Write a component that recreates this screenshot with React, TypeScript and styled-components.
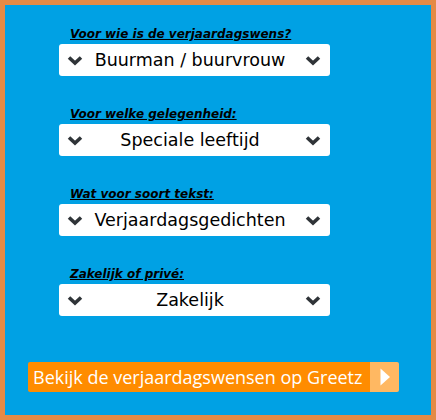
import styled, { createGlobalStyle } from 'styled-components';

const GlobalStyle = createGlobalStyle`
  html, body {
    margin: 0;
    padding: 0;
  }
  body {
    font-family: "DejaVu Sans", Verdana, sans-serif;
  }
`;

const Frame = styled.div`
  box-sizing: border-box;
  width: 436px;
  height: 420px;
  background-color: #00a1e4;
  border: 5px solid #e58a45;
  display: flex;
  flex-direction: column;
  padding: 20px 0 0 54px;
`;

const Field = styled.div`
  display: flex;
  flex-direction: column;
  margin-bottom: 29px;
`;

const Label = styled.div`
  font-family: "DejaVu Sans", Verdana, sans-serif;
  font-size: 12px;
  font-weight: bold;
  font-style: italic;
  text-decoration: underline;
  color: #000;
  height: 19px;
  line-height: 18px;
  padding-left: 11px;
`;

const Select = styled.div`
  box-sizing: border-box;
  width: 271px;
  height: 32px;
  background: #fff;
  border-radius: 3px;
  display: flex;
  align-items: center;
  padding: 0 9px 0 8px;
`;

const Value = styled.div`
  flex: 1;
  text-align: center;
  font-family: "DejaVu Sans", Verdana, sans-serif;
  font-size: 17.5px;
  color: #000;
  padding-right: 8px;
  white-space: nowrap;
`;

const Chevron = () => (
  <svg width="16" height="11" viewBox="0 0 16 11">
    <path d="M2 2.5 L8 8 L14 2.5" fill="none" stroke="#2f3438" strokeWidth="3.6" />
  </svg>
);

const Button = styled.div`
  margin-top: 17px;
  margin-left: -31px;
  width: 371px;
  height: 30px;
  display: flex;
  border-radius: 2px;
  overflow: hidden;
`;

const ButtonText = styled.div`
  flex: 1;
  background: #ff8c00;
  color: #fff;
  font-family: "Open Sans", "DejaVu Sans", sans-serif;
  font-size: 18px;
  line-height: 30px;
  padding-left: 5px;
  white-space: nowrap;
`;

const ArrowBox = styled.div`
  width: 29px;
  background: #ffb862;
  display: flex;
  align-items: center;
  justify-content: center;
`;

const fields = [
  { label: 'Voor wie is de verjaardagswens?', value: 'Buurman / buurvrouw' },
  { label: 'Voor welke gelegenheid:', value: 'Speciale leeftijd' },
  { label: 'Wat voor soort tekst:', value: 'Verjaardagsgedichten' },
  { label: 'Zakelijk of privé:', value: 'Zakelijk' },
];

const App = () => (
  <>
    <GlobalStyle />
    <Frame>
      {fields.map(f => (
        <Field key={f.label}>
          <Label>{f.label}</Label>
          <Select>
            <Chevron />
            <Value>{f.value}</Value>
            <Chevron />
          </Select>
        </Field>
      ))}
      <Button>
        <ButtonText>Bekijk de verjaardagswensen op Greetz</ButtonText>
        <ArrowBox>
          <svg width="12" height="20" viewBox="0 0 12 20">
            <path d="M1.5 1.5 L11 10 L1.5 18.5 Z" fill="#fff" />
          </svg>
        </ArrowBox>
      </Button>
    </Frame>
  </>
);

export default App;
